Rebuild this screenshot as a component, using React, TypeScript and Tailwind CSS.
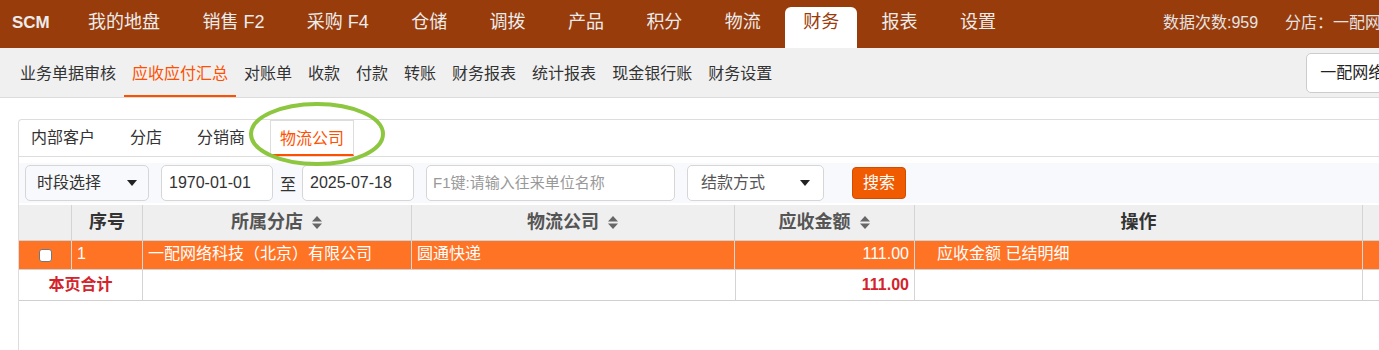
import React from "react";

const FONT = "font-['Liberation_Sans','Noto_Sans_CJK_SC',sans-serif]";

function SortIcon() {
  return (
    <svg width="12" height="15" viewBox="0 0 12 15" className="inline-block ml-[8px] align-[-1px]">
      <path d="M6 1 L11 6.5 L1 6.5 Z" fill="#666" />
      <path d="M6 14 L11 8.5 L1 8.5 Z" fill="#666" />
    </svg>
  );
}

function Caret() {
  return (
    <svg width="10" height="6" viewBox="0 0 10 6">
      <path d="M0 0 L10 0 L5 6 Z" fill="#222" />
    </svg>
  );
}

export default function App() {
  const top = ["我的地盘", "销售 F2", "采购 F4", "仓储", "调拨", "产品", "积分", "物流", "财务", "报表", "设置"];
  const sub = ["业务单据审核", "应收应付汇总", "对账单", "收款", "付款", "转账", "财务报表", "统计报表", "现金银行账", "财务设置"];
  const cols = "grid grid-cols-[53px_71px_269px_323px_180px_448px_100px]";
  return (
    <div className={`relative w-[1379px] h-[350px] overflow-hidden bg-white ${FONT}`}>
      {/* top bar */}
      <div className="flex h-[48px] bg-[#993c0b] text-[#ececec] text-[18px] whitespace-nowrap">
        <div className="w-[70px] shrink-0 pl-[12px] pt-[12px] leading-[22px] font-bold text-[17px]">SCM</div>
        <div className="flex items-end gap-[6.4px] shrink-0">
          {top.map((t) => (
            <div
              key={t}
              className={
                t === "财务"
                  ? "h-[41px] px-[18px] pt-[4px] leading-[22px] bg-white text-[#993c0b] rounded-t-[6px]"
                  : "h-[41px] px-[18px] pt-[4px] leading-[22px]"
              }
            >
              {t}
            </div>
          ))}
        </div>
        <div className="flex shrink-0 ml-[149px] pt-[12px] leading-[22px] text-[16px] text-[#e4e4e4]">
          <span>数据次数:959</span>
          <span className="ml-[27px]">分店：一配网络科技（北京）有限公司</span>
        </div>
      </div>

      {/* sub bar */}
      <div className="flex h-[50px] bg-[#f0f0f0] border-b border-[#dcdcdc] pl-[12px] text-[16px] text-[#333] whitespace-nowrap">
        {sub.map((t) => (
          <div
            key={t}
            className={
              t === "应收应付汇总"
                ? "h-full flex items-center px-[8px] pt-[4px] border-b-[2px] border-[#ff5000] text-[#ff5000]"
                : "h-full flex items-center px-[8px] pt-[4px] border-b-[2px] border-transparent"
            }
          >
            {t}
          </div>
        ))}
        <div className="ml-[526px] shrink-0 self-center mt-[1px] h-[40px] w-[200px] flex items-center pl-[13px] bg-white border border-[#ccc] rounded-[5px] text-[#222]">
          一配网络科技（北京）有限公司
        </div>
      </div>

      {/* panel */}
      <div className="ml-[18px] mt-[21px] w-[1400px] h-[231px] border-l border-t border-[#ddd] rounded-tl-[4px]">
        {/* tabs */}
        <div className="flex h-[37px] border-b border-[#ddd] pl-[2px] gap-[15px] text-[16px] text-[#333] whitespace-nowrap">
          <div className="px-[10px] flex items-center">内部客户</div>
          <div className="px-[10px] flex items-center">分店</div>
          <div className="px-[10px] flex items-center">分销商</div>
          <div className="px-[9px] flex items-center border-x border-t border-[#ddd] border-b-[2px] border-b-[#ff5000] text-[#ff5000] pt-[2px]">
            物流公司
          </div>
        </div>

        {/* filters */}
        <div className="mt-[6px] h-[40px] bg-[#f8f9fc] flex items-center pl-[6px] text-[16px] text-[#333] whitespace-nowrap">
          <div className="w-[124px] h-[36px] border border-[#d6d6d6] rounded-[5px] bg-[#f8f9fc] flex items-center justify-between pl-[11px] pr-[11px]">
            <span>时段选择</span>
            <Caret />
          </div>
          <div className="ml-[12px] w-[112px] h-[36px] border border-[#d6d6d6] rounded-[5px] bg-white flex items-center pl-[7px]">
            1970-01-01
          </div>
          <span className="ml-[7px] mt-[3px]">至</span>
          <div className="ml-[6px] w-[112px] h-[36px] border border-[#d6d6d6] rounded-[5px] bg-white flex items-center pl-[7px]">
            2025-07-18
          </div>
          <div className="ml-[12px] w-[249px] h-[36px] border border-[#d6d6d6] rounded-[5px] bg-white flex items-center pl-[6px] text-[15px] text-[#999]">
            F1键:请输入往来单位名称
          </div>
          <div className="ml-[12px] w-[137px] h-[36px] border border-[#d6d6d6] rounded-[5px] bg-white flex items-center justify-between pl-[13px] pr-[13px] text-[#555]">
            <span>结款方式</span>
            <Caret />
          </div>
          <div className="ml-[28px] w-[54px] h-[32px] rounded-[4px] bg-[#f05a00] border border-[#d24c00] text-white flex items-center justify-center">
            搜索
          </div>
        </div>

        {/* table */}
        <div className="mt-[2px] text-[16px] whitespace-nowrap">
          <div className={`${cols} h-[36px] bg-[#efefef] border-b border-[#d0d0d0] font-bold text-[18px]`}>
            <div className="border-r border-[#d4d4d4]"></div>
            <div className="border-r border-[#d4d4d4] flex items-center justify-center text-[#333]">序号</div>
            <div className="border-r border-[#d4d4d4] flex items-center justify-center text-[#555]">
              所属分店<SortIcon />
            </div>
            <div className="border-r border-[#d4d4d4] flex items-center justify-center text-[#555]">
              物流公司<SortIcon />
            </div>
            <div className="border-r border-[#d4d4d4] flex items-center justify-center text-[#555]">
              应收金额<SortIcon />
            </div>
            <div className="border-r border-[#d4d4d4] flex items-center justify-center text-[#333]">操作</div>
            <div></div>
          </div>

          <div className={`${cols} h-[29px] bg-[#ff7325] border-b border-[#d0d0d0] text-white`}>
            <div className="border-r border-[#d8d8d8] flex items-center justify-center">
              <div className="w-[13px] h-[13px] bg-white border border-[#767676] rounded-[3px]"></div>
            </div>
            <div className="border-r border-[#d8d8d8] flex items-center pl-[5px] pb-[2px]">1</div>
            <div className="border-r border-[#d8d8d8] flex items-center pl-[5px] pb-[2px]">一配网络科技（北京）有限公司</div>
            <div className="border-r border-[#d8d8d8] flex items-center pl-[5px] pb-[2px]">圆通快递</div>
            <div className="border-r border-[#d8d8d8] flex items-center justify-end pr-[5px] pb-[2px]">111.00</div>
            <div className="border-r border-[#d8d8d8] flex items-center pl-[22px] pb-[2px]">应收金额 已结明细</div>
            <div></div>
          </div>

          <div className={`${cols} h-[31px] border-b border-[#d0d0d0] font-bold text-[#d4232b]`}>
            <div className="col-span-2 border-r border-[#d4d4d4] flex items-center justify-center">本页合计</div>
            <div className="col-span-2"></div>
            <div className="border-x border-[#d4d4d4] flex items-center justify-end pr-[5px]">111.00</div>
            <div className="border-r border-[#d4d4d4]"></div>
            <div></div>
          </div>
        </div>
      </div>

      {/* annotation ellipse */}
      <svg className="absolute left-[246px] top-[99px] pointer-events-none" width="142" height="70" viewBox="0 0 142 70">
        <ellipse cx="71" cy="35" rx="66" ry="30" fill="none" stroke="#8dc63f" strokeWidth="4" />
      </svg>
    </div>
  );
}
